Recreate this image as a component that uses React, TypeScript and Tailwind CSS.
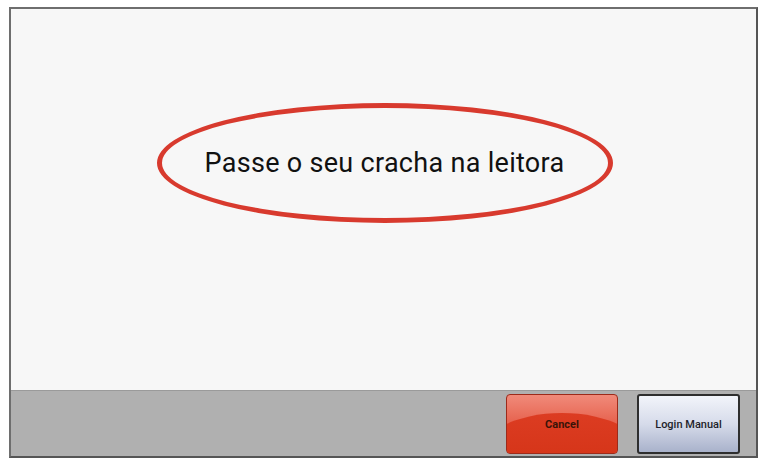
import React from 'react';

const App: React.FC = () => {
  return (
    <div className="w-[768px] h-[465px] bg-white pt-[7px] pl-[9px]" style={{ fontFamily: 'Roboto, "Liberation Sans", sans-serif' }}>
      <div className="w-[749px] h-[451px] flex flex-col border-2 border-[#6e6e6e] border-r-[#555] border-b-[#555] bg-[#f7f7f7]">
        {/* Prompt area */}
        <div className="flex-1 flex justify-center pt-[94px] pl-[2px]">
          <div className="w-[456px] h-[120px] rounded-[50%] border-[5px] border-[#d83a2e] flex items-center justify-center">
            <span className="text-[27px] text-[#111] tracking-[0.3px]">Passe o seu cracha na leitora</span>
          </div>
        </div>

        {/* Bottom bar */}
        <div className="h-[66px] bg-[#b0b0b0] border-t border-[#9a9a9a] flex items-center justify-end gap-[19px] pr-[16px]">
          <button className="relative w-[112px] h-[60px] pt-[3px] rounded-[4px] border border-[#9c2a1a] overflow-hidden bg-gradient-to-b from-[#f08a7a] via-[#e6604c] to-[#e05038] text-[11px] font-bold text-[#3a1408]">
            <span className="absolute left-[-30px] right-[-30px] top-[18px] h-[90px] rounded-[50%] bg-gradient-to-b from-[#dc3c22] to-[#cf2e0c]" />
            <span className="relative">Cancel</span>
          </button>
          <button className="w-[103px] h-[60px] pt-[3px] rounded-[3px] border-2 border-[#2e2e2e] bg-gradient-to-b from-[#f2f4fa] via-[#d6dbea] to-[#a9b2cb] text-[11px] font-medium text-[#1f1f2a]">
            Login Manual
          </button>
        </div>
      </div>
    </div>
  );
};

export default App;
